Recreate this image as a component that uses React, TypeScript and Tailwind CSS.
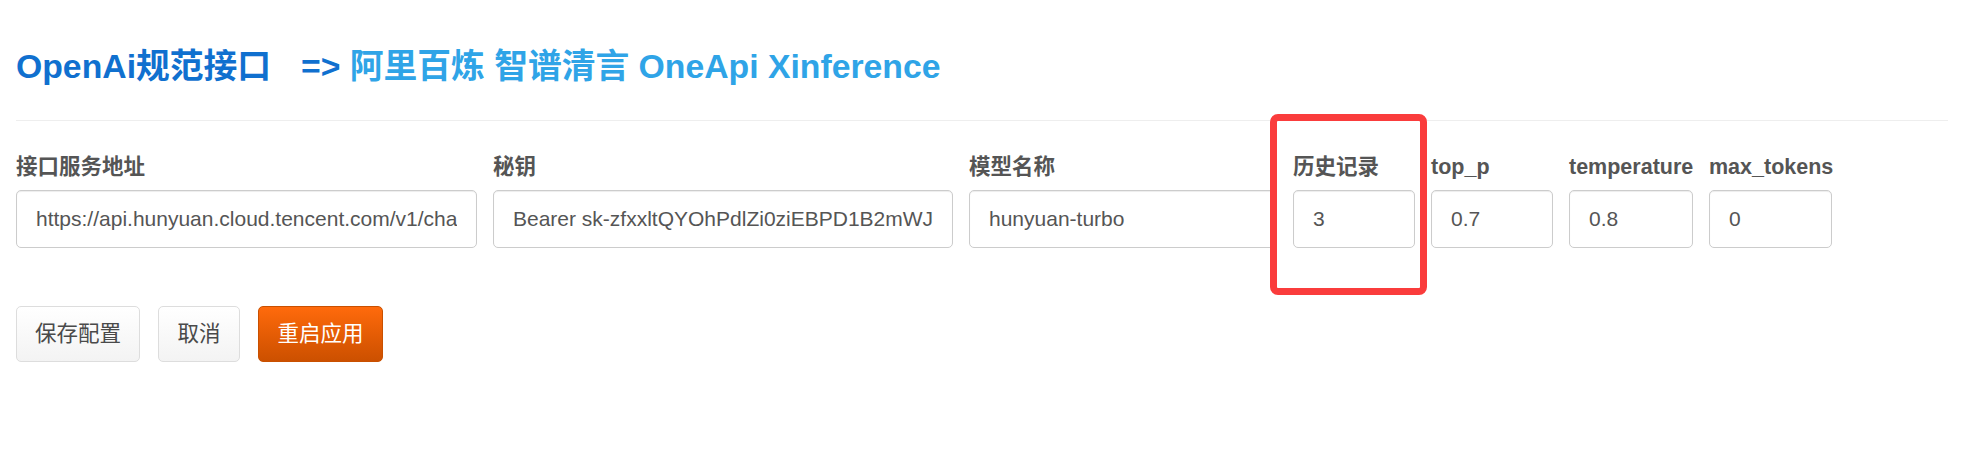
import React from "react";

const fields = [
  { label: "接口服务地址", value: "https://api.hunyuan.cloud.tencent.com/v1/chat/completions", w: "w-[461px]" },
  { label: "秘钥", value: "Bearer sk-zfxxltQYOhPdlZi0ziEBPD1B2mWJq8Tn", w: "w-[460px]" },
  { label: "模型名称", value: "hunyuan-turbo", w: "w-[308px]" },
  { label: "历史记录", value: "3", w: "w-[122px]", marked: true },
  { label: "top_p", value: "0.7", w: "w-[122px]" },
  { label: "temperature", value: "0.8", w: "w-[124px]" },
  { label: "max_tokens", value: "0", w: "w-[123px]" },
];

function Field({ label, value, w, marked }: { label: string; value: string; w: string; marked?: boolean }) {
  return (
    <div className={`relative ${w} shrink-0`}>
      <label className="block text-[21.5px] leading-[30px] font-bold text-[#555555] whitespace-nowrap mb-2">
        {label}
      </label>
      <input
        readOnly
        value={value}
        className="block w-full h-[58px] px-[19px] border border-[#cccccc] rounded-[5px] bg-white text-[21px] text-[#555555] shadow-[inset_0_1px_1px_rgba(0,0,0,0.075)] outline-none"
      />
      {marked && (
        <div className="absolute -left-[23px] -top-[38px] w-[157px] h-[181px] border-[7px] border-[#fa3c3c] rounded-[8px] pointer-events-none" />
      )}
    </div>
  );
}

export default function App() {
  return (
    <div className="min-h-screen bg-white px-4 font-['Liberation_Sans','Noto_Sans_CJK_SC',sans-serif]">
      <h3 className="pt-[48px] text-[33.75px] leading-[37px] font-bold whitespace-nowrap">
        <span className="text-[#1070cf]">OpenAi规范接口</span>
        <span className="ml-[30px] text-[#1070cf]">=&gt;</span>
        <span className="text-[#2fa4e7]"> 阿里百炼 智谱清言 OneApi Xinference</span>
      </h3>
      <div className="mt-[35px] border-t border-[#eeeeee]" />

      <div className="mt-[31px] flex gap-4">
        {fields.map((f) => (
          <Field key={f.label} {...f} />
        ))}
      </div>

      <div className="mt-[58px] flex gap-[18px] text-[21.5px]">
        <button className="w-[124px] h-[56px] border border-[#dddddd] rounded-[5px] bg-gradient-to-b from-white to-[#f3f3f3] text-[#4a4a4a]">
          保存配置
        </button>
        <button className="w-[82px] h-[56px] border border-[#dddddd] rounded-[5px] bg-gradient-to-b from-white to-[#f3f3f3] text-[#4a4a4a]">
          取消
        </button>
        <button className="w-[125px] h-[56px] border border-[#c95000] rounded-[5px] bg-gradient-to-b from-[#ff6a0c] to-[#cc5000] text-white">
          重启应用
        </button>
      </div>
    </div>
  );
}
